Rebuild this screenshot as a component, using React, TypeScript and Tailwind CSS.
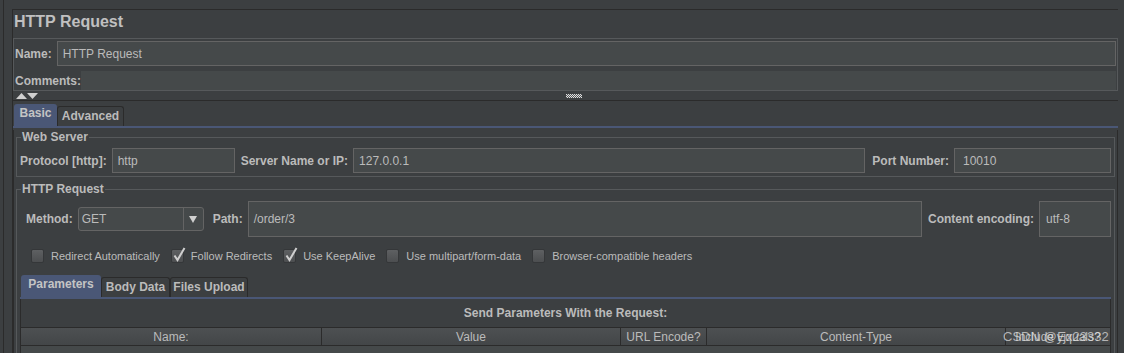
import React from "react";

const field =
  "bg-[#45494a] border border-[#646464] flex items-center px-[5px] text-[12px] text-[#bbbbbb]";

function Tab({ label, active, width }: { label: string; active?: boolean; width: string }) {
  if (active) {
    return (
      <div className={`${width} h-[22px] flex justify-center pt-[2px] bg-[#4a5776] rounded-t-[3px] text-[12px] leading-[14px] font-bold text-[#c4c4c4]`}>
        {label}
      </div>
    );
  }
  return (
    <div className={`${width} h-[20px] flex items-center justify-center pb-px border border-b-0 border-[#2b2b2b] rounded-t-[3px] text-[12px] leading-[14px] font-bold`}>
      {label}
    </div>
  );
}

function Check({ label, checked }: { label: string; checked?: boolean }) {
  return (
    <div className="flex items-center gap-[7px]">
      <div className="relative w-[13px] h-[14px] rounded-[2px] border border-[#353739] bg-gradient-to-b from-[#5e6062] to-[#4c4e50]">
        {checked && (
          <svg className="absolute left-[1px] top-[-3px]" width="13" height="15" viewBox="0 0 13 15">
            <path d="M1.5 8.5 L4.5 13 L11.5 1" stroke="#cfcfcf" strokeWidth="2" fill="none" />
          </svg>
        )}
      </div>
      <span className="text-[11px] leading-[14px] text-[#bbbbbb]">{label}</span>
    </div>
  );
}

function Grip() {
  const dots = [];
  for (let y = 0; y < 4; y++) {
    for (let x = 0; x < 16; x++) {
      if ((x + y) % 2 === 0) dots.push(<rect key={`${x}-${y}`} x={x} y={y} width="1" height="1" fill="#e0e0e0" />);
    }
  }
  return (
    <svg width="16" height="4" viewBox="0 0 16 4">
      <rect width="16" height="4" fill="#55585a" />
      {dots}
    </svg>
  );
}

export default function App() {
  return (
    <div className="relative w-[1124px] h-[353px] overflow-hidden bg-[#3c3f41] text-[#bbbbbb] leading-[14px] font-['Liberation_Sans',Arial,sans-serif] pl-[3px] pr-[6px]">
      <div className="h-full border-l border-[#2b2b2b] pl-[8px] pt-[9px]">
        <div className="h-full border-t border-l border-[#2b2b2b]">
          {/* title */}
          <div className="h-[28px] flex items-center pb-[4px] pl-px text-[16px] leading-[18px] font-bold text-[#c0c0c0]">HTTP Request</div>

          {/* name / comments */}
          <div className="border border-[#56595b]">
            <div className="h-[29px] flex items-center pl-px pr-px gap-[5px]">
              <span className="text-[12px] font-bold">Name:</span>
              <div className={`${field} flex-1 h-[25px]`}>HTTP Request</div>
            </div>
            <div className="h-[22px] flex items-end pl-px pr-px">
              <span className="text-[12px] font-bold pb-[2px]">Comments:</span>
              <div className="flex-1 h-[19px] bg-[#45494a]" />
            </div>
          </div>

          {/* splitter */}
          <div className="h-[9px] flex items-center pl-[3px]">
            <svg width="22" height="6" viewBox="0 0 22 6">
              <path d="M0 6 L5.5 0 L11 6 Z" fill="#cfcfcf" />
              <path d="M11 0 L22 0 L16.5 6 Z" fill="#cfcfcf" />
            </svg>
            <div className="ml-[528px]">
              <Grip />
            </div>
          </div>

          {/* main tabs */}
          <div className="border-t border-[#2b2b2b] pt-[3px]">
            <div className="flex items-end pl-px">
              <Tab label="Basic" active width="w-[43px]" />
              <Tab label="Advanced" width="w-[67px]" />
            </div>
            <div className="h-[2px] bg-[#4a5776]" />
            <div className="h-[240px] border-l border-r border-[#2b2b2b] px-[2px]">
              {/* Web Server */}
              <fieldset className="mt-[2px] border border-[#56595b]">
                <legend className="ml-[4px] px-px text-[12px] font-bold leading-[14px]">Web Server</legend>
                <div className="flex items-center pt-[4px] pb-[3px] pl-[3px] pr-[3px]">
                  <span className="text-[12px] font-bold">Protocol [http]:</span>
                  <div className={`${field} ml-[5px] w-[123px] h-[25px]`}>http</div>
                  <span className="ml-[6px] text-[12px] font-bold">Server Name or IP:</span>
                  <div className={`${field} ml-[5px] flex-1 h-[25px]`}>127.0.0.1</div>
                  <span className="ml-[7px] text-[12px] font-bold">Port Number:</span>
                  <div className={`${field} ml-[5px] w-[157px] h-[25px] pl-[8px]`}>10010</div>
                </div>
              </fieldset>

              {/* HTTP Request */}
              <fieldset className="mt-[5px] border border-[#56595b] h-[200px]">
                <legend className="ml-[4px] px-px text-[12px] font-bold leading-[14px]">HTTP Request</legend>
                <div className="flex items-center pt-[5px] pl-[9px] pr-[3px]">
                  <span className="text-[12px] font-bold">Method:</span>
                  <div className="ml-[5px] w-[126px] h-[24px] flex bg-[#45494a] border border-[#646464] rounded-[3px]">
                    <div className="flex-1 flex items-center pl-[3px] text-[12px]">GET</div>
                    <div className="w-[20px] border-l border-[#646464] flex items-center justify-center">
                      <svg width="8" height="7" viewBox="0 0 8 7">
                        <path d="M0 0 H8 L4 7 Z" fill="#d0d0d0" />
                      </svg>
                    </div>
                  </div>
                  <span className="ml-[9px] text-[12px] font-bold">Path:</span>
                  <div className={`${field} ml-[5px] flex-1 h-[36px]`}>/order/3</div>
                  <span className="ml-[6px] text-[12px] font-bold">Content encoding:</span>
                  <div className={`${field} ml-[5px] w-[72px] h-[36px] pl-[6px]`}>utf-8</div>
                </div>

                <div className="mt-[12px] flex items-center gap-[11px] pl-[14px]">
                  <Check label="Redirect Automatically" />
                  <Check label="Follow Redirects" checked />
                  <Check label="Use KeepAlive" checked />
                  <Check label="Use multipart/form-data" />
                  <Check label="Browser-compatible headers" />
                </div>

                {/* inner tabs */}
                <div className="mt-[12px] px-[3px]">
                  <div className="flex items-end pl-px">
                    <Tab label="Parameters" active width="w-[80px]" />
                    <Tab label="Body Data" width="w-[69px]" />
                    <Tab label="Files Upload" width="w-[78px]" />
                  </div>
                  <div className="h-[2px] bg-[#4a5776]" />
                  <div className="border-l border-r border-[#2b2b2b] h-[80px]">
                    <div className="h-[28px] flex items-center justify-center text-[12px] font-bold">
                      Send Parameters With the Request:
                    </div>
                    <div className="grid grid-cols-[301px_299px_86px_299px_1fr] h-[19px] border-t border-b border-[#2b2b2b] bg-gradient-to-b from-[#4d5052] to-[#434648] text-[12px]">
                      <div className="flex items-center justify-center border-r border-[#2b2b2b]">Name:</div>
                      <div className="flex items-center justify-center border-r border-[#2b2b2b]">Value</div>
                      <div className="flex items-center justify-center border-r border-[#2b2b2b]">URL Encode?</div>
                      <div className="flex items-center justify-center border-r border-[#2b2b2b]">Content-Type</div>
                      <div className="flex items-center justify-center whitespace-nowrap overflow-hidden">Include Equals?</div>
                    </div>
                    <div className="h-[40px] bg-[#45494a]" />
                  </div>
                </div>
              </fieldset>
            </div>
          </div>
        </div>
      </div>

      {/* watermark */}
      <div className="absolute left-[1003px] top-[329px] text-[13px] leading-[15px] text-[#e6e6e6]/70 whitespace-nowrap">
        CSDN @yjx23332
      </div>
    </div>
  );
}
